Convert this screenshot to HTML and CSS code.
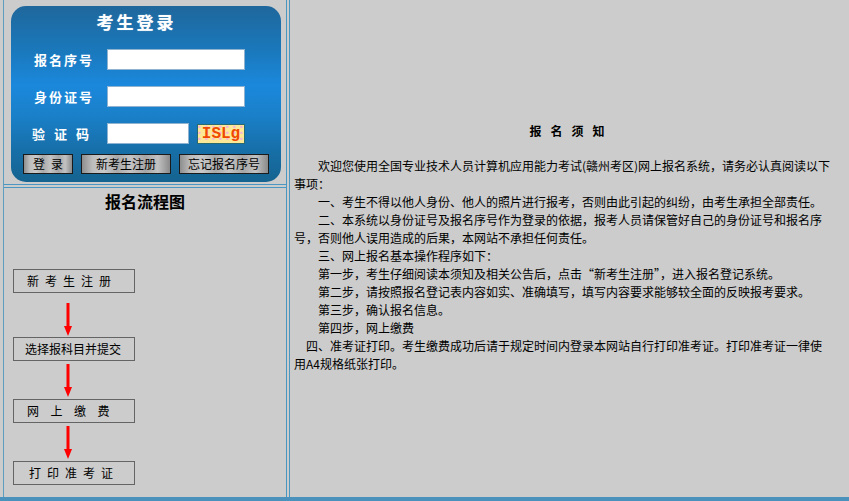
FILE: index.html
```html
<!DOCTYPE html>
<html lang="zh-CN">
<head>
<meta charset="utf-8">
<title>考生登录 - 网上报名系统</title>
<link rel="stylesheet" href="styles.css">
</head>
<body>
<div class="page">
  <div class="side">
    <div class="login-cell">
      <form class="login">
        <div class="login-title">考生登录</div>
        <div class="row">
          <label class="lbl">报名序号</label>
          <input class="inp" type="text">
        </div>
        <div class="row">
          <label class="lbl">身份证号</label>
          <input class="inp" type="text">
        </div>
        <div class="row">
          <label class="lbl lbl-wide">验证码</label>
          <input class="inp inp-short" type="text">
          <span class="captcha">ISLg</span>
        </div>
        <div class="btns">
          <button type="button" class="btn btn-login">登录</button>
          <button type="button" class="btn">新考生注册</button>
          <button type="button" class="btn">忘记报名序号</button>
        </div>
      </form>
    </div>
    <div class="flow-cell">
      <div class="flow-title">报名流程图</div>
      <div class="flow">
        <div class="step step-a">新考生注册</div>
        <svg class="arrow arrow-first" width="12" height="33" viewBox="0 0 12 33"><rect x="4.5" y="0" width="3" height="24" fill="#ff0000"/><polygon points="2,23 10,23 6,33" fill="#ff0000"/></svg>
        <div class="step step-b">选择报科目并提交</div>
        <svg class="arrow" width="12" height="33" viewBox="0 0 12 33"><rect x="4.5" y="0" width="3" height="24" fill="#ff0000"/><polygon points="2,23 10,23 6,33" fill="#ff0000"/></svg>
        <div class="step step-c">网上缴费</div>
        <svg class="arrow" width="12" height="33" viewBox="0 0 12 33"><rect x="4.5" y="0" width="3" height="24" fill="#ff0000"/><polygon points="2,23 10,23 6,33" fill="#ff0000"/></svg>
        <div class="step step-d">打印准考证</div>
      </div>
    </div>
  </div>
  <div class="main">
    <div class="notice-title">报名须知</div>
    <p class="para">欢迎您使用全国专业技术人员计算机应用能力考试(赣州考区)网上报名系统，请务必认真阅读以下<br><span class="cont">事项：</span></p>
    <p class="para">一、考生不得以他人身份、他人的照片进行报考，否则由此引起的纠纷，由考生承担全部责任。</p>
    <p class="para">二、本系统以身份证号及报名序号作为登录的依据，报考人员请保管好自己的身份证号和报名序<br><span class="cont">号，否则他人误用造成的后果，本网站不承担任何责任。</span></p>
    <p class="para">三、网上报名基本操作程序如下：</p>
    <p class="para">第一步，考生仔细阅读本须知及相关公告后，点击“新考生注册”，进入报名登记系统。</p>
    <p class="para">第二步，请按照报名登记表内容如实、准确填写，填写内容要求能够较全面的反映报考要求。</p>
    <p class="para">第三步，确认报名信息。</p>
    <p class="para">第四步，网上缴费</p>
    <p class="para para-half">四、准考证打印。考生缴费成功后请于规定时间内登录本网站自行打印准考证。打印准考证一律使<br><span class="cont-half">用A4规格纸张打印。</span></p>
  </div>
</div>
</body>
</html>
```

FILE: styles.css
```css
html, body {
  margin: 0;
  padding: 0;
}
body {
  background: #cccccc;
  font-family: "Noto Sans CJK SC", "Liberation Sans", sans-serif;
  font-size: 12px;
  color: #000;
  width: 849px;
  height: 501px;
  overflow: hidden;
}
.page {
  display: flex;
  height: 497px;
  border-bottom: 4px solid #4a92bb;
}
.side {
  margin-left: 3px;
  width: 282px;
  border-left: 1px solid #5f9cc0;
  border-right: 1px solid #4a98c2;
  display: flex;
  flex-direction: column;
}
.login-cell {
  height: 185px;
  box-sizing: border-box;
  border-bottom: 1px solid #4a98c2;
  padding: 6px 0 0 7px;
}
.login {
  margin: 0;
  width: 270px;
  height: 176px;
  box-sizing: border-box;
  padding-top: 6px;
  border-radius: 15px;
  background: linear-gradient(#1f679c 0%, #1a78bb 25%, #1b88dc 45%, #1a80c9 62%, #176fa8 82%, #15638f 100%);
}
.login-title {
  height: 20px;
  line-height: 20px;
  font-size: 17px;
  font-weight: 700;
  letter-spacing: 3px;
  color: #fff;
  text-align: center;
  padding-right: 19px;
  margin-bottom: 17px;
  text-shadow: 0 0 1px rgba(255,255,255,0.6);
}
.row {
  display: flex;
  align-items: center;
  height: 21px;
  margin-bottom: 16px;
  padding-left: 23px;
}
.row:nth-of-type(4) {
  margin-bottom: 10px;
}
.lbl {
  width: 73px;
  font-size: 13px;
  font-weight: 700;
  color: #fff;
  letter-spacing: 2px;
  line-height: 21px;
  white-space: nowrap;
}
.lbl-wide {
  letter-spacing: 9px;
  margin-left: -2px;
  width: 75px;
}
.inp {
  width: 138px;
  height: 21px;
  box-sizing: border-box;
  border: 1px solid #8fb2d0;
  background: #fff;
  margin: 0;
  padding: 0 2px;
  outline: none;
}
.inp-short {
  width: 82px;
}
.captcha {
  margin-left: 8px;
  width: 48px;
  height: 20px;
  box-sizing: border-box;
  border: 1px solid #2b6b70;
  background: radial-gradient(circle at 20% 30%, #f6b8d0 0 1px, transparent 1.5px) 0 0 / 7px 6px, #fde898;
  color: #f04a00;
  font-family: "Liberation Mono", monospace;
  font-size: 16px;
  font-weight: 700;
  line-height: 18px;
  text-align: center;
}
.btns {
  display: flex;
  gap: 8px;
  padding-left: 12px;
}
.btn {
  width: 90px;
  height: 20px;
  box-sizing: border-box;
  border: 1px solid #1a1a1a;
  margin: 0;
  padding: 0;
  font-family: "Noto Sans CJK SC", sans-serif;
  font-size: 12px;
  line-height: 18px;
  color: #000;
  background: linear-gradient(to right, #8e8e8e 0%, #bdbdbd 12%, #c9c9c9 25%, #a9a9a9 40%, #c4c4c4 55%, #a6a6a6 72%, #c2c2c2 86%, #8a8a8a 100%);
}
.btn-login {
  width: 50px;
  letter-spacing: 6px;
  text-indent: 6px;
}
.flow-cell {
  margin-top: 2px;
  border-top: 1px solid #4a98c2;
  flex: 1;
  padding-top: 3px;
}
.flow-title {
  font-size: 16px;
  font-weight: 700;
  line-height: 20px;
  text-align: center;
  margin-bottom: 58px;
}
.flow {
  display: flex;
  flex-direction: column;
  padding-left: 9px;
}
.step {
  width: 122px;
  height: 24px;
  box-sizing: border-box;
  border: 1px solid #646464;
  line-height: 22px;
  font-size: 12px;
  white-space: nowrap;
}
.step-a { padding-left: 13px; letter-spacing: 6px; }
.step-b { padding-left: 11px; }
.step-c { padding-left: 13px; letter-spacing: 11.5px; }
.step-d { padding-left: 15px; letter-spacing: 6px; }
.arrow {
  display: block;
  margin: 3px 0 2px 49px;
}
.arrow-first {
  margin-top: 10px;
  margin-bottom: 1px;
}
.main {
  flex: 1;
  margin-left: 2px;
  border-left: 1px solid #4a98c2;
  padding: 122px 0 0 4px;
}
.notice-title {
  text-align: center;
  font-weight: 700;
  font-size: 12px;
  line-height: 18px;
  letter-spacing: 9px;
  margin-bottom: 17px;
}
.para {
  margin: 0;
  line-height: 18px;
  white-space: nowrap;
  padding-left: 24px;
}
.cont {
  margin-left: -24px;
}
.para-half {
  padding-left: 12px;
}
.cont-half {
  margin-left: -12px;
}
```
